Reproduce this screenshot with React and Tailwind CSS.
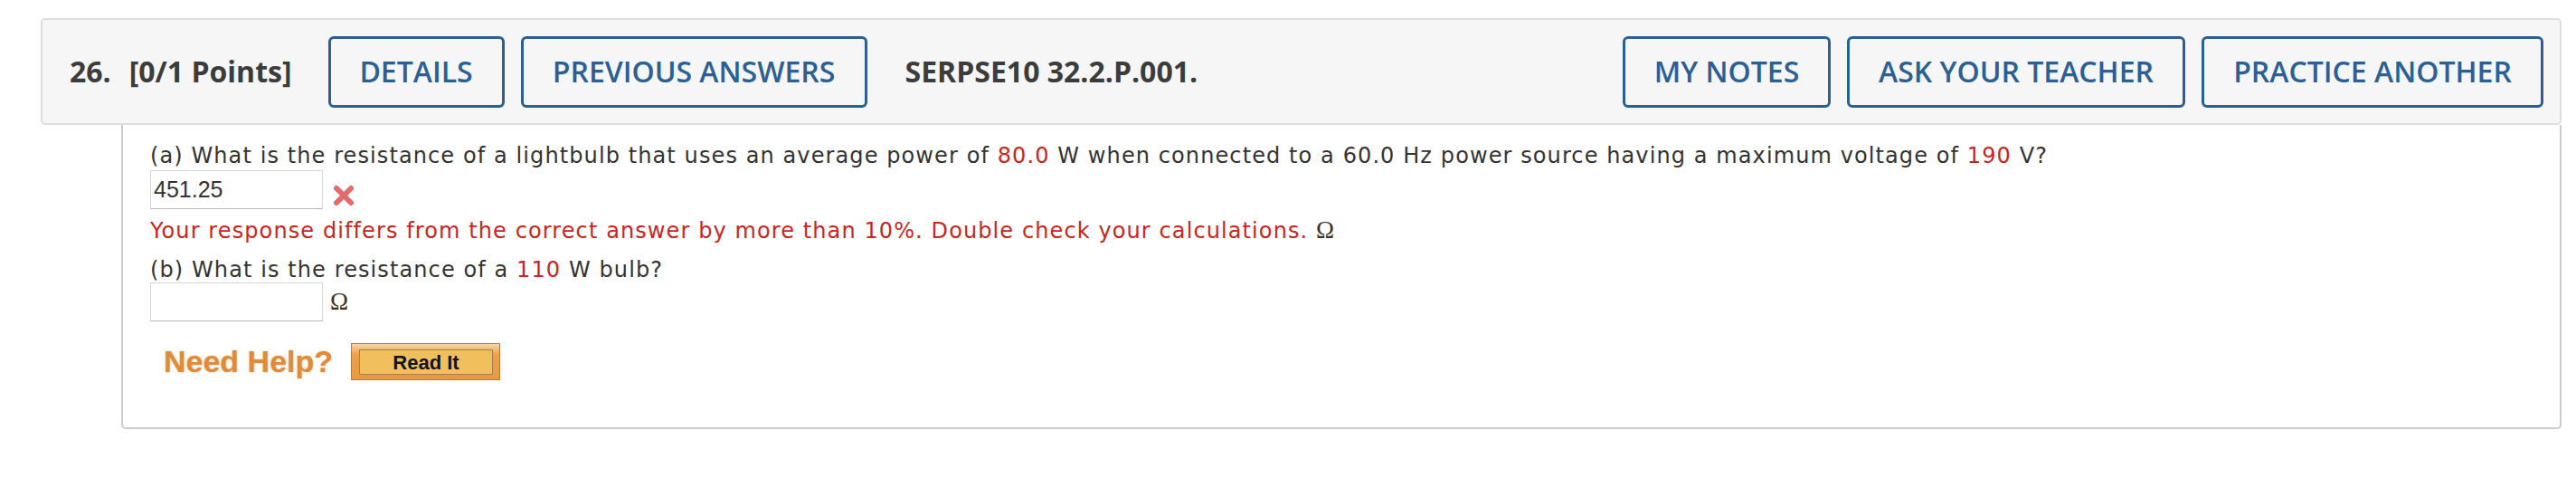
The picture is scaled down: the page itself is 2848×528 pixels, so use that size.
import React from "react";

const HeaderButton = ({ label, width }) => (
  <div
    className={`h-[79px] ${width} flex items-center justify-center rounded-[6px] border-[3px] border-[#2a6096] text-[32px] font-semibold text-[#2a6096] whitespace-nowrap`}
  >
    {label}
  </div>
);

const Red = ({ children }) => <span className="text-[#c8261d]">{children}</span>;

const Omega = () => (
  <span className="font-['Liberation_Serif',serif] text-[27px] tracking-normal text-[#333]">Ω</span>
);

const WrongMark = () => (
  <svg width="26" height="26" viewBox="0 0 26 26" className="ml-[10px] mt-[15px]">
    <path
      d="M5 5 L21 21 M21 5 L5 21"
      stroke="#e46b6b"
      strokeWidth="6"
      strokeLinecap="round"
    />
  </svg>
);

const AnswerBox = ({ value }) => (
  <div className="w-[191px] h-[43px] border border-[#d6d6d6] border-b-[#b9b9b9] bg-white pl-[3px] font-['Liberation_Sans',Arial,sans-serif] text-[25px] leading-[41px] tracking-normal text-[#333]">
    {value}
  </div>
);

export default function App() {
  return (
    <div className="min-h-[528px] bg-white pl-[45px] pr-[16px] pt-[20px]">
      {/* question header */}
      <div className="h-[118px] flex items-center rounded-[5px] border-2 border-[#dddddd] bg-[#f6f6f6] pl-[30px] pr-[18px] font-['Open_Sans',sans-serif]">
        <span className="text-[32px] font-bold text-[#3c3c3c]">26.</span>
        <span className="ml-[20px] text-[32px] font-bold text-[#3c3c3c]">[0/1 Points]</span>
        <div className="ml-[40px] flex gap-[18px]">
          <HeaderButton label="DETAILS" width="w-[195px]" />
          <HeaderButton label="PREVIOUS ANSWERS" width="w-[383px]" />
        </div>
        <span className="ml-[42px] text-[32px] font-bold text-[#3c3c3c]">SERPSE10 32.2.P.001.</span>
        <div className="ml-auto flex gap-[18px]">
          <HeaderButton label="MY NOTES" width="w-[230px]" />
          <HeaderButton label="ASK YOUR TEACHER" width="w-[374px]" />
          <HeaderButton label="PRACTICE ANOTHER" width="w-[378px]" />
        </div>
      </div>

      {/* question body */}
      <div className="ml-[89px] rounded-b-[5px] border-2 border-t-0 border-[#cbcbcb] pl-[30px] pt-[17px] pb-[52px] font-['DejaVu_Sans',Verdana,sans-serif] text-[24px] tracking-[1.1px] text-[#333]">
        <p className="leading-[34px] whitespace-nowrap">
          (a) What is the resistance of a lightbulb that uses an average power of <Red>80.0</Red> W when
          connected to a 60.0 Hz power source having a maximum voltage of <Red>190</Red> V?
        </p>
        <div className="mt-[-1px] flex items-start">
          <AnswerBox value="451.25" />
          <WrongMark />
        </div>
        <p className="mt-[6px] leading-[34px] whitespace-nowrap">
          <Red>
            Your response differs from the correct answer by more than 10%. Double check your
            calculations.
          </Red>{" "}
          <Omega />
        </p>
        <p className="mt-[9px] leading-[34px] whitespace-nowrap">
          (b) What is the resistance of a <Red>110</Red> W bulb?
        </p>
        <div className="mt-[-3px] flex items-start">
          <AnswerBox value="" />
          <span className="ml-[8px] font-['Liberation_Serif',serif] text-[27px] leading-[43px] tracking-normal text-[#333]">Ω</span>
        </div>

        <div className="mt-[24px] flex items-start tracking-normal">
          <span className="ml-[15px] w-[207px] font-['Liberation_Sans',Arial,sans-serif] text-[34px] font-bold leading-[41px] text-[#e38a38] [text-shadow:0_0_2px_rgba(227,138,56,0.6)]">
            Need Help?
          </span>
          <div className="w-[165px] h-[41px] border border-[#b97a3c] bg-linear-to-b from-[#f7d6a6] from-0% via-[#eba146] via-30% to-[#e99a40] pl-[8px] pr-[7px] pt-[6px]">
            <div className="h-[28px] flex items-center justify-center border border-[#a87e4e] bg-[#f2bf5d] font-['Liberation_Sans',Arial,sans-serif] text-[22px] font-bold text-[#141414]">
              Read It
            </div>
          </div>
        </div>
      </div>
    </div>
  );
}
